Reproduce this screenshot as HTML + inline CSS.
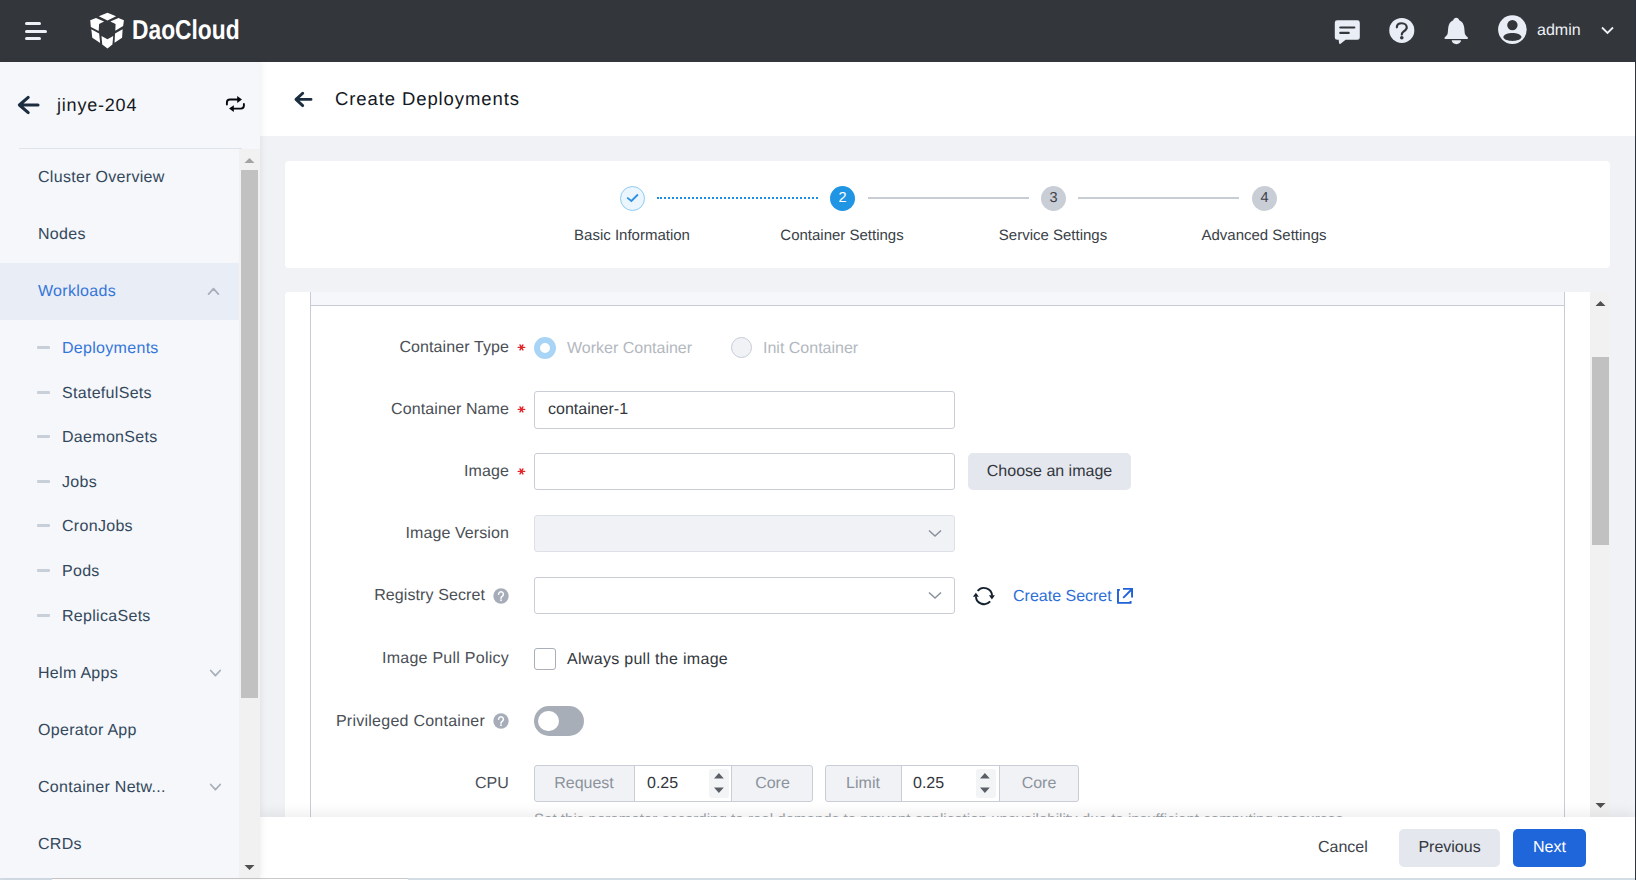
<!DOCTYPE html>
<html><head><meta charset="utf-8">
<style>
*{box-sizing:border-box;margin:0;padding:0}
html,body{width:1636px;height:880px;overflow:hidden;background:#f0f2f5;font-family:"Liberation Sans",sans-serif;text-rendering:geometricPrecision}
.a{position:absolute}
.t{position:absolute;white-space:nowrap;line-height:1}
#hdr{left:0;top:0;width:1636px;height:62px;background:#33363b}
.hb{position:absolute;left:25px;height:3px;border-radius:2px;background:#eef1f7}
#side{left:0;top:62px;width:260px;height:816px;background:#f5f7fb;box-shadow:2px 0 6px rgba(0,0,0,0.06);z-index:2}
.mi{font-size:16px;color:#34485c;letter-spacing:0.3px}
.dash{position:absolute;left:37px;width:13px;height:3px;border-radius:1px;background:#c9cfd8}
#main{left:260px;top:62px;width:1375px;height:816px;background:#f0f2f5;overflow:hidden}
.lbl{font-size:16px;color:#4b4f56;text-align:right;letter-spacing:0.1px}
.req{position:absolute;color:#e5343d;font-size:16px}
.inp{position:absolute;left:534px;width:421px;height:37px;border:1px solid #c9cdd6;border-radius:3px;background:#fff}
.chev{position:absolute}
</style></head>
<body>
<!-- header -->
<div id="hdr" class="a">
  <div class="hb" style="top:22px;width:16px"></div>
  <div class="hb" style="top:29.5px;width:22px"></div>
  <div class="hb" style="top:37px;width:16px"></div>
  <svg class="a" style="left:85px;top:8px" width="50" height="46" viewBox="0 0 957 880">
    <g fill="#fff">
      <polygon points="265,160 430,92 595,160 430,240"/>
      <polygon points="100,235 210,190 365,258 270,305 262,440 112,362"/>
      <polygon points="745,235 640,190 485,258 585,305 580,435 730,345"/>
      <polygon points="120,405 270,490 290,670 140,570"/>
      <polygon points="315,535 430,600 540,535 525,700 430,775 330,700"/>
      <polygon points="720,405 575,490 565,665 710,570"/>
    </g>
  </svg>
  <div class="t" style="left:131.6px;top:15.9px;font-size:27.3px;font-weight:bold;color:#fff;transform-origin:0 0;transform:scaleX(0.835)">DaoCloud</div>
  <!-- chat -->
  <svg class="a" style="left:1330px;top:15px" width="34" height="34" viewBox="0 0 34 34">
    <path d="M7.2,5.3 H27.4 a2.4,2.4 0 0 1 2.4,2.4 V22.4 a2.4,2.4 0 0 1 -2.4,2.4 H15.6 L10.6,28.8 Q9.4,29.3 9,28 L8.7,24.8 H7.2 a2.4,2.4 0 0 1 -2.4,-2.4 V7.7 a2.4,2.4 0 0 1 2.4,-2.4 Z" fill="#e9edf5"/>
    <rect x="9.2" y="11.4" width="16.2" height="2.2" rx="1.1" fill="#33363b"/>
    <rect x="9.2" y="16.8" width="10.6" height="2.2" rx="1.1" fill="#33363b"/>
  </svg>
  <!-- help + bell -->
  <svg class="a" style="left:1385px;top:12px" width="90" height="38" viewBox="0 0 1636 691">
    <circle cx="305" cy="335" r="228" fill="#e9edf5"/>
    <path d="M215,278 C215,228 255,205 305,205 C360,205 395,240 395,282 C395,322 365,338 335,356 C312,371 305,386 305,410" stroke="#33363b" stroke-width="40" fill="none" stroke-linecap="round"/>
    <circle cx="305" cy="468" r="33" fill="#33363b"/>
    <path d="M1295,105 C1325,105 1342,128 1350,150 C1405,175 1432,220 1440,282 L1450,385 C1456,420 1480,440 1505,458 Q1518,492 1490,492 L1100,492 Q1072,492 1085,458 C1110,440 1134,420 1140,385 L1150,282 C1158,220 1185,175 1240,150 C1248,128 1265,105 1295,105 Z" fill="#e9edf5"/>
    <path d="M1213,512 H1382 A84,72 0 0 1 1213,512 Z" fill="#e9edf5"/>
  </svg>
  <!-- avatar -->
  <svg class="a" style="left:1494px;top:12px" width="36" height="36" viewBox="0 0 36 36">
    <circle cx="18.4" cy="17.6" r="14.3" fill="#e9edf5"/>
    <circle cx="18.4" cy="13.1" r="5.2" fill="#33363b"/>
    <path d="M9.3,25 C10.6,19.8 26.2,19.8 27.5,25 C26.2,30.2 10.6,30.2 9.3,25 Z" fill="#33363b"/>
  </svg>
  <div class="t" style="left:1537px;top:23px;font-size:16px;color:#eef1f7">admin</div>
  <svg class="a" style="left:1600px;top:25px" width="16" height="10" viewBox="0 0 16 10">
    <path d="M2,2.5 L7.5,8 L13,2.5" stroke="#eef1f7" stroke-width="1.8" fill="none"/>
  </svg>
</div>

<!-- sidebar -->
<div id="side" class="a">
  <svg class="a" style="left:16px;top:32px" width="26" height="22" viewBox="0 0 26 22">
    <path d="M12.2,3.4 L3.4,11 L12.2,18.6 M4,11 H22" stroke="#1c2d40" stroke-width="3.1" fill="none" stroke-linecap="round" stroke-linejoin="round"/>
  </svg>
  <div class="t" style="left:57px;top:34px;font-size:18px;color:#151a20;letter-spacing:0.8px">jinye-204</div>
  <svg class="a" style="left:224px;top:32px" width="24" height="20" viewBox="0 0 24 20">
    <path d="M2.9,10.6 V8.6 Q2.9,5.5 6,5.5 H14" stroke="#05080c" stroke-width="1.9" fill="none" stroke-linecap="round"/>
    <path d="M13.2,2.1 L18,5.5 L13.2,8.9 Z" fill="#05080c"/>
    <path d="M19.9,10 V11.6 Q19.9,14.6 16.9,14.6 H9" stroke="#05080c" stroke-width="1.9" fill="none" stroke-linecap="round"/>
    <path d="M9.8,11.2 L5,14.6 L9.8,18 Z" fill="#05080c"/>
  </svg>
  <div class="a" style="left:19px;top:86px;width:223px;height:1px;background:#dfe3ea"></div>
  <!-- menu -->
  <div class="t mi" style="left:38px;top:107.5px">Cluster Overview</div>
  <div class="t mi" style="left:38px;top:165px">Nodes</div>
  <div class="a" style="left:0;top:201px;width:239px;height:57px;background:#e9edf5"></div>
  <div class="t mi" style="left:38px;top:222px;color:#3576d9">Workloads</div>
  <svg class="a" style="left:203px;top:223px" width="20" height="14" viewBox="0 0 20 14"><path d="M5.6,9.1 L10.5,3.6 L15.4,9.1" stroke="#a9b0ba" stroke-width="1.8" fill="none" stroke-linecap="round" stroke-linejoin="round"/></svg>
  <div class="dash" style="top:284px"></div>
  <div class="t mi" style="left:62px;top:279px;color:#3576d9">Deployments</div>
  <div class="dash" style="top:329px"></div>
  <div class="t mi" style="left:62px;top:324px">StatefulSets</div>
  <div class="dash" style="top:373px"></div>
  <div class="t mi" style="left:62px;top:368px">DaemonSets</div>
  <div class="dash" style="top:418px"></div>
  <div class="t mi" style="left:62px;top:413px">Jobs</div>
  <div class="dash" style="top:462px"></div>
  <div class="t mi" style="left:62px;top:457px">CronJobs</div>
  <div class="dash" style="top:507px"></div>
  <div class="t mi" style="left:62px;top:502px">Pods</div>
  <div class="dash" style="top:552px"></div>
  <div class="t mi" style="left:62px;top:547px">ReplicaSets</div>
  <div class="t mi" style="left:38px;top:603.5px">Helm Apps</div>
  <svg class="a" style="left:208px;top:605px" width="16" height="12" viewBox="0 0 16 12"><path d="M2.7,3.5 L7.4,8.7 L12.2,3.5" stroke="#a9b0ba" stroke-width="1.8" fill="none" stroke-linecap="round" stroke-linejoin="round"/></svg>
  <div class="t mi" style="left:38px;top:660.5px">Operator App</div>
  <div class="t mi" style="left:38px;top:718px">Container Netw...</div>
  <svg class="a" style="left:208px;top:719px" width="16" height="12" viewBox="0 0 16 12"><path d="M2.7,3.5 L7.4,8.7 L12.2,3.5" stroke="#a9b0ba" stroke-width="1.8" fill="none" stroke-linecap="round" stroke-linejoin="round"/></svg>
  <div class="t mi" style="left:38px;top:774.5px">CRDs</div>
  <!-- scrollbar -->
  <div class="a" style="left:239px;top:87px;width:21px;height:729px;background:#f1f1f1"></div>
  <div class="a" style="left:241px;top:108px;width:17px;height:528px;background:#c1c1c1"></div>
  <svg class="a" style="left:244px;top:95px" width="11" height="7" viewBox="0 0 11 7"><path d="M0.5,6 L5.5,1 L10.5,6 Z" fill="#a3a3a3"/></svg>
  <svg class="a" style="left:244px;top:802px" width="11" height="7" viewBox="0 0 11 7"><path d="M0.5,1 L5.5,6 L10.5,1 Z" fill="#505050"/></svg>
</div>

<!-- main -->
<div class="a" style="left:260px;top:62px;width:1375px;height:74px;background:#fff"></div>
<svg class="a" style="left:292px;top:90px" width="24" height="20" viewBox="0 0 24 20">
  <path d="M10.7,3.2 L4,9.4 L10.7,15.6 M4.4,9.4 H19" stroke="#1c2d40" stroke-width="2.9" fill="none" stroke-linecap="round" stroke-linejoin="round"/>
</svg>
<div class="t" style="left:335px;top:90px;font-size:18.5px;color:#14191f;letter-spacing:0.9px">Create Deployments</div>

<!-- stepper card -->
<div class="a" style="left:285px;top:161px;width:1325px;height:107px;background:#fff;border-radius:4px"></div>
<div class="a" style="left:619.5px;top:186px;width:25px;height:25px;border-radius:50%;border:1px solid #8fcbf3;background:#eaf5fd"></div>
<svg class="a" style="left:620px;top:186px" width="25" height="25" viewBox="0 0 25 25"><path d="M7.2,11.6 L11.4,15 L17.9,8.5" stroke="#2a8fe0" stroke-width="1.8" fill="none"/></svg>
<div class="a" style="left:657px;top:197px;width:161px;height:0;border-top:2px dotted #1a8fe3"></div>
<div class="a" style="left:830px;top:186px;width:25px;height:25px;border-radius:50%;background:#1f95e3"></div>
<div class="t" style="left:830px;top:190.6px;width:25px;text-align:center;font-size:14.5px;color:#fff">2</div>
<div class="a" style="left:868px;top:197px;width:161px;height:2px;background:#c8ccd3"></div>
<div class="a" style="left:1041px;top:186px;width:25px;height:25px;border-radius:50%;background:#c9ced6"></div>
<div class="t" style="left:1041px;top:190.6px;width:25px;text-align:center;font-size:14.5px;color:#3b4048">3</div>
<div class="a" style="left:1078px;top:197px;width:161px;height:2px;background:#c8ccd3"></div>
<div class="a" style="left:1252px;top:186px;width:25px;height:25px;border-radius:50%;background:#c9ced6"></div>
<div class="t" style="left:1252px;top:190.6px;width:25px;text-align:center;font-size:14.5px;color:#3b4048">4</div>
<div class="t" style="left:532px;top:228px;width:200px;text-align:center;font-size:15px;color:#3a3f47">Basic Information</div>
<div class="t" style="left:742px;top:228px;width:200px;text-align:center;font-size:15px;color:#3a3f47">Container Settings</div>
<div class="t" style="left:953px;top:228px;width:200px;text-align:center;font-size:15px;color:#3a3f47">Service Settings</div>
<div class="t" style="left:1164px;top:228px;width:200px;text-align:center;font-size:15px;color:#3a3f47">Advanced Settings</div>

<!-- form card -->
<div class="a" style="left:285px;top:292px;width:1325px;height:600px;background:#fff;border-radius:4px"></div>
<div class="a" style="left:310px;top:292px;width:1255px;height:14px;background:#f6f7fa;border-left:1px solid #c9ccd6;border-right:1px solid #c9ccd6;border-bottom:1px solid #c9ccd6"></div>
<div class="a" style="left:310px;top:306px;width:1255px;height:600px;border-left:1px solid #c9ccd6;border-right:1px solid #c9ccd6"></div>
<!-- right scrollbar -->
<div class="a" style="left:1590px;top:292px;width:20px;height:530px;background:#f1f1f1"></div>
<div class="a" style="left:1592px;top:357px;width:17px;height:188px;background:#c1c1c1"></div>
<svg class="a" style="left:1595px;top:300px" width="11" height="7" viewBox="0 0 11 7"><path d="M0.5,6 L5.5,1 L10.5,6 Z" fill="#505050"/></svg>
<svg class="a" style="left:1595px;top:802px" width="11" height="7" viewBox="0 0 11 7"><path d="M0.5,1 L5.5,6 L10.5,1 Z" fill="#505050"/></svg>

<!-- rows -->
<div class="t lbl" style="left:300px;top:339.6px;width:209px">Container Type</div>
<svg class="a" style="left:512px;top:338px" width="20" height="20" viewBox="0 0 20 20"><path d="M6.2,9.4 H12.7 M8,6.9 L10.9,11.9 M10.9,6.9 L8,11.9" stroke="#e3242b" stroke-width="1.4" stroke-linecap="round"/></svg>
<div class="a" style="left:534px;top:337px;width:22px;height:22px;border-radius:50%;border:6px solid #a8d5f5;background:#fff"></div>
<div class="t" style="left:567px;top:340.7px;font-size:16px;color:#b3b8c0">Worker Container</div>
<div class="a" style="left:731px;top:337px;width:21px;height:21px;border-radius:50%;border:1px solid #c6cbd4;background:#f0f2f6"></div>
<div class="t" style="left:763px;top:340.7px;font-size:16px;color:#b3b8c0">Init Container</div>

<div class="t lbl" style="left:300px;top:401.5px;width:209px">Container Name</div>
<svg class="a" style="left:512px;top:400px" width="20" height="20" viewBox="0 0 20 20"><path d="M6.2,9.4 H12.7 M8,6.9 L10.9,11.9 M10.9,6.9 L8,11.9" stroke="#e3242b" stroke-width="1.4" stroke-linecap="round"/></svg>
<div class="inp" style="top:391px;height:38px"></div>
<div class="t" style="left:548px;top:402px;font-size:16px;color:#33373d">container-1</div>

<div class="t lbl" style="left:300px;top:464px;width:209px">Image</div>
<svg class="a" style="left:512px;top:462px" width="20" height="20" viewBox="0 0 20 20"><path d="M6.2,9.4 H12.7 M8,6.9 L10.9,11.9 M10.9,6.9 L8,11.9" stroke="#e3242b" stroke-width="1.4" stroke-linecap="round"/></svg>
<div class="inp" style="top:453px"></div>
<div class="a" style="left:968px;top:453px;width:163px;height:37px;border-radius:5px;background:#e4e7ee"></div>
<div class="t" style="left:968px;top:464px;width:163px;text-align:center;font-size:16px;color:#33373d">Choose an image</div>

<div class="t lbl" style="left:300px;top:526px;width:209px">Image Version</div>
<div class="inp" style="top:515px;background:#f0f2f6;border-color:#dde1e7"></div>
<svg class="a" style="left:927px;top:528px" width="16" height="10" viewBox="0 0 16 10"><path d="M2,2.5 L8,8 L14,2.5" stroke="#8a909a" stroke-width="1.5" fill="none"/></svg>

<div class="t lbl" style="left:276px;top:588.3px;width:209px">Registry Secret</div>
<svg class="a" style="left:493px;top:588px" width="16" height="16" viewBox="0 0 16 16"><circle cx="8" cy="8" r="7.7" fill="#a7adb8"/><path d="M5.6,6.2 a2.4,2.4 0 1 1 3.6,2.1 c-0.8,0.5 -1.2,0.8 -1.2,1.9" stroke="#fff" stroke-width="1.5" fill="none" stroke-linecap="round"/><circle cx="8" cy="12.2" r="0.9" fill="#fff"/></svg>
<div class="inp" style="top:577px"></div>
<svg class="a" style="left:927px;top:590px" width="16" height="10" viewBox="0 0 16 10"><path d="M2,2.5 L8,8 L14,2.5" stroke="#8a909a" stroke-width="1.5" fill="none"/></svg>
<svg class="a" style="left:968px;top:582px" width="32" height="28" viewBox="0 0 32 28">
  <path d="M9.62,8.93 A8.2,8.2 0 0 1 24.1,13.8" stroke="#14202e" stroke-width="1.9" fill="none"/>
  <path d="M20.9,13.3 L26.9,13.3 L23.9,17.6 Z" fill="#14202e"/>
  <path d="M22.18,19.47 A8.2,8.2 0 0 1 7.9,14.6" stroke="#14202e" stroke-width="1.9" fill="none"/>
  <path d="M4.9,14.7 L10.9,14.7 L7.9,10.8 Z" fill="#14202e"/>
</svg>
<div class="t" style="left:1013px;top:589px;font-size:16px;color:#2d6fd6">Create Secret</div>
<svg class="a" style="left:1112px;top:582px" width="28" height="28" viewBox="0 0 28 28">
  <path d="M7.9,7.9 H6 V20.9 H18.6 V19" stroke="#1f61d9" stroke-width="1.9" fill="none"/>
  <path d="M11,6.85 H20.05 V15.6" stroke="#1f61d9" stroke-width="1.9" fill="none"/>
  <path d="M11.2,15.9 L19.6,7.5" stroke="#1f61d9" stroke-width="1.9" fill="none"/>
</svg>

<div class="t lbl" style="left:300px;top:651.1px;width:209px;letter-spacing:0.25px">Image Pull Policy</div>
<div class="a" style="left:534px;top:648px;width:22px;height:22px;border-radius:3px;border:1px solid #a9afb9;background:#fff"></div>
<div class="t" style="left:567px;top:652px;font-size:16px;color:#33373d;letter-spacing:0.3px">Always pull the image</div>

<div class="t lbl" style="left:276px;top:714px;width:209px;letter-spacing:0.25px">Privileged Container</div>
<svg class="a" style="left:493px;top:713px" width="16" height="16" viewBox="0 0 16 16"><circle cx="8" cy="8" r="7.7" fill="#a7adb8"/><path d="M5.6,6.2 a2.4,2.4 0 1 1 3.6,2.1 c-0.8,0.5 -1.2,0.8 -1.2,1.9" stroke="#fff" stroke-width="1.5" fill="none" stroke-linecap="round"/><circle cx="8" cy="12.2" r="0.9" fill="#fff"/></svg>
<div class="a" style="left:534px;top:706px;width:50px;height:30px;border-radius:15px;background:#a8aeb8"></div>
<div class="a" style="left:538.4px;top:710.7px;width:20.5px;height:20.5px;border-radius:50%;background:#fff"></div>

<div class="t lbl" style="left:300px;top:775.5px;width:209px">CPU</div>
<!-- group 1 -->
<div class="a" style="left:534px;top:765px;width:279px;height:37px;border:1px solid #c9cdd6;border-radius:3px;background:#f0f2f6;overflow:hidden">
  <div class="a" style="left:99px;top:0;width:98px;height:35px;background:#fff;border-left:1px solid #c9cdd6;border-right:1px solid #c9cdd6"></div>
  <div class="a" style="left:174px;top:3px;width:20px;height:29px;border-radius:3px;background:#f3f4f6"></div>
</div>
<div class="t" style="left:534px;top:776px;width:100px;text-align:center;font-size:16px;color:#8c929b">Request</div>
<div class="t" style="left:647px;top:775.6px;font-size:16px;color:#33373d">0.25</div>
<svg class="a" style="left:713px;top:772px" width="12" height="22" viewBox="0 0 12 22"><path d="M1,6.6 L5.9,1 L10.8,6.6 Z M1,15.4 L5.9,21 L10.8,15.4 Z" fill="#5a5f66"/></svg>
<div class="t" style="left:732px;top:776px;width:81px;text-align:center;font-size:16px;color:#8c929b">Core</div>
<!-- group 2 -->
<div class="a" style="left:825px;top:765px;width:254px;height:37px;border:1px solid #c9cdd6;border-radius:3px;background:#f0f2f6;overflow:hidden">
  <div class="a" style="left:75px;top:0;width:99px;height:35px;background:#fff;border-left:1px solid #c9cdd6;border-right:1px solid #c9cdd6"></div>
  <div class="a" style="left:150px;top:3px;width:20px;height:29px;border-radius:3px;background:#f3f4f6"></div>
</div>
<div class="t" style="left:825px;top:776px;width:76px;text-align:center;font-size:16px;color:#8c929b">Limit</div>
<div class="t" style="left:913px;top:775.6px;font-size:16px;color:#33373d">0.25</div>
<svg class="a" style="left:979px;top:772px" width="12" height="22" viewBox="0 0 12 22"><path d="M1,6.6 L5.9,1 L10.8,6.6 Z M1,15.4 L5.9,21 L10.8,15.4 Z" fill="#5a5f66"/></svg>
<div class="t" style="left:999px;top:776px;width:80px;text-align:center;font-size:16px;color:#8c929b">Core</div>
<div class="t" style="left:534px;top:811.5px;font-size:15px;color:#a0a5ad;letter-spacing:0.04px">Set this parameter according to real demands to prevent application unavailability due to insufficient computing resources.</div>

<!-- footer -->
<div class="a" style="left:260px;top:817px;width:1375px;height:61px;background:#fff;box-shadow:0 -4px 12px rgba(0,0,0,0.07)"></div>
<div class="t" style="left:1318px;top:840px;font-size:16px;color:#3e434b">Cancel</div>
<div class="a" style="left:1399px;top:829px;width:101px;height:38px;border-radius:5px;background:#e4e7ee"></div>
<div class="t" style="left:1399px;top:840px;width:101px;text-align:center;font-size:16px;color:#33373d">Previous</div>
<div class="a" style="left:1513px;top:829px;width:73px;height:38px;border-radius:5px;background:#1f66db"></div>
<div class="t" style="left:1513px;top:840px;width:73px;text-align:center;font-size:16px;color:#fff">Next</div>
<!-- bottom/right strips -->
<div class="a" style="left:0;top:878px;width:1636px;height:2px;background:#d3dde6"></div>
<div class="a" style="left:52px;top:878px;width:356px;height:2px;background:#fff;border-top:1px solid #c9c9c9"></div>
<div class="a" style="left:1635px;top:0;width:1px;height:880px;background:#2b3440"></div>
</body></html>
